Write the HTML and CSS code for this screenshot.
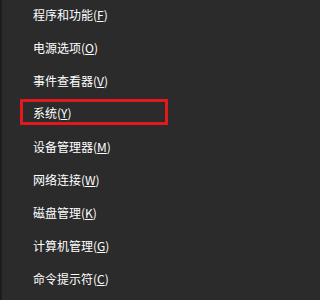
FILE: index.html
```html
<!DOCTYPE html>
<html lang="zh-CN">
<head>
<meta charset="utf-8">
<link rel="stylesheet" href="styles.css">
</head>
<body>
<ul class="menu">
  <li class="item">程序和功能(<u>F</u>)</li>
  <li class="item">电源选项(<u>O</u>)</li>
  <li class="item">事件查看器(<u>V</u>)</li>
  <li class="item marked">系统(<u>Y</u>)</li>
  <li class="item">设备管理器(<u>M</u>)</li>
  <li class="item">网络连接(<u>W</u>)</li>
  <li class="item">磁盘管理(<u>K</u>)</li>
  <li class="item">计算机管理(<u>G</u>)</li>
  <li class="item">命令提示符(<u>C</u>)</li>
</ul>
</body>
</html>
```
FILE: styles.css
```css
html {
  margin: 0;
  padding: 0;
  height: 100%;
  background: #2b2b2b;
}
body {
  margin: 0;
  padding: 0;
  width: 227px;
  height: 300px;
  background: #2b2b2b;
  border-left: 2px solid #1d1d1d;
  box-sizing: border-box;
  font-family: "Microsoft YaHei", "Noto Sans CJK SC", "Liberation Sans", sans-serif;
  font-size: 12px;
  color: #ffffff;
  overflow: hidden;
}
.menu {
  list-style: none;
  margin: -2px 0 0 0;
  padding: 0;
}
.item {
  height: 33px;
  display: flex;
  align-items: center;
  padding-left: 31px;
  box-sizing: border-box;
  white-space: nowrap;
}
.item u {
  text-decoration-thickness: 1px;
  text-underline-offset: 1px;
}
.item.marked {
  height: 26px;
  margin: 2px 59px 5px 18px;
  padding-left: 10px;
  border: 3px solid #e3181d;
}
```
